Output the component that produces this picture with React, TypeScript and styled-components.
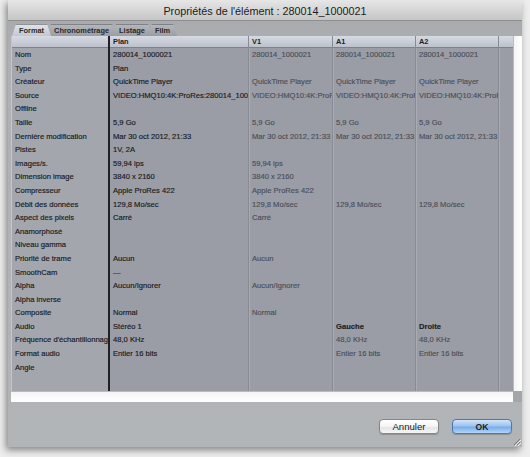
import React from 'react';
import styled, { createGlobalStyle } from 'styled-components';

const GlobalStyle = createGlobalStyle`
  html, body {
    margin: 0;
    padding: 0;
    background: #ededed;
    font-family: "Liberation Sans", Arial, sans-serif;
  }
`;

const ROW_HEIGHT = 13.6;

const labels = [
  'Nom',
  'Type',
  'Créateur',
  'Source',
  'Offline',
  'Taille',
  'Dernière modification',
  'Pistes',
  'Images/s.',
  'Dimension image',
  'Compresseur',
  'Débit des données',
  'Aspect des pixels',
  'Anamorphosé',
  'Niveau gamma',
  'Priorité de trame',
  'SmoothCam',
  'Alpha',
  'Alpha inverse',
  'Composite',
  'Audio',
  "Fréquence d'échantillonnage",
  'Format audio',
  'Angle',
];

// the sheet cuts long paths at the column edge
const sourceFull = 'VIDEO:HMQ10:4K:ProRes:280014_10000';
const sourceTrack = 'VIDEO:HMQ10:4K:ProRe';
const date = 'Mar 30 oct 2012, 21:33';

type Column = {
  title: string;
  width: number;
  primary?: boolean;
  values: string[];
};

const columns: Column[] = [
  {
    title: 'Plan',
    width: 140,
    primary: true,
    values: [
      '280014_1000021', 'Plan', 'QuickTime Player', sourceFull, '', '5,9 Go', date, '1V, 2A',
      '59,94 ips', '3840 x 2160', 'Apple ProRes 422', '129,8 Mo/sec', 'Carré', '', '',
      'Aucun', '—', 'Aucun/Ignorer', '', 'Normal', 'Stéréo 1', '48,0 KHz', 'Entier 16 bits', '',
    ],
  },
  {
    title: 'V1',
    width: 84,
    values: [
      '280014_1000021', '', 'QuickTime Player', sourceTrack, '', '5,9 Go', date, '',
      '59,94 ips', '3840 x 2160', 'Apple ProRes 422', '129,8 Mo/sec', 'Carré', '', '',
      'Aucun', '', 'Aucun/Ignorer', '', 'Normal', '', '', '', '',
    ],
  },
  {
    title: 'A1',
    width: 83,
    values: [
      '280014_1000021', '', 'QuickTime Player', sourceTrack, '', '5,9 Go', date, '',
      '', '', '', '129,8 Mo/sec', '', '', '',
      '', '', '', '', '', 'Gauche', '48,0 KHz', 'Entier 16 bits', '',
    ],
  },
  {
    title: 'A2',
    width: 83,
    values: [
      '280014_1000021', '', 'QuickTime Player', sourceTrack, '', '5,9 Go', date, '',
      '', '', '', '129,8 Mo/sec', '', '', '',
      '', '', '', '', '', 'Droite', '48,0 KHz', 'Entier 16 bits', '',
    ],
  },
];

const emphasized = new Set(['Gauche', 'Droite']);

const tabs = ['Format', 'Chronométrage', 'Listage', 'Film'];

const Page = styled.div`
  height: 457px;
  padding-left: 8px;
  box-sizing: border-box;
`;

const Window = styled.div`
  position: relative;
  width: 514px;
  height: 447px;
  display: flex;
  flex-direction: column;
  background: #b2b5b8;
  box-shadow: -2px 3px 7px rgba(0, 0, 0, 0.45);
`;

const TitleBar = styled.div`
  height: 21px;
  flex-shrink: 0;
  display: flex;
  align-items: center;
  justify-content: center;
  padding-top: 1px;
  box-sizing: border-box;
  background: linear-gradient(#e6e6e6, #c6c6c6);
  border-bottom: 1px solid #8d8d8d;
  color: #1b1b1b;
  font-size: 10.8px;
`;

const Body = styled.div`
  flex: 1;
  display: flex;
  flex-direction: column;
  padding: 3px 0 0 3px;
  background: linear-gradient(#a9abae 0px, #aeb1b4 40px, #b2b5b8 100%);
`;

const TabStrip = styled.div`
  height: 12px;
  display: flex;
  align-items: flex-end;
  padding-left: 1px;
`;

const Tab = styled.div<{ $active?: boolean }>`
  height: 12px;
  display: flex;
  align-items: center;
  padding: 0 7px;
  margin-right: -4px;
  box-sizing: border-box;
  font-size: 7.4px;
  font-weight: bold;
  color: #2a2a2a;
  clip-path: polygon(4px 0, calc(100% - 4px) 0, 100% 100%, 0 100%);
  background: ${p => (p.$active ? 'linear-gradient(#e0e2e6, #c3c7ce)' : 'linear-gradient(#b4b6ba, #9a9da2)')};
  position: relative;
  z-index: ${p => (p.$active ? 2 : 1)};
  border-top: 1px solid ${p => (p.$active ? '#8e9299' : '#7f8288')};
`;

const Panel = styled.div`
  height: 366px;
  display: flex;
  flex-direction: column;
`;

const PanelMain = styled.div`
  flex: 1;
  display: flex;
  min-height: 0;
`;

const Table = styled.div`
  width: 502px;
  display: flex;
  background: #9a9da6;
  border-left: 1px solid #c4c6ca;
  box-sizing: border-box;
`;

const VTrack = styled.div`
  flex: 1;
  background: linear-gradient(90deg, #f4f4f4, #ffffff);
  border-left: 1px solid #b9bbbf;
`;

const PanelBottom = styled.div`
  height: 11px;
  display: flex;
`;

const HTrack = styled.div`
  width: 502px;
  background: linear-gradient(#f4f4f4, #ffffff);
  border-top: 1px solid #b9bbbf;
  box-sizing: border-box;
`;

const ScrollCorner = styled.div`
  flex: 1;
  background: #a3a5a9;
`;

const TableColumn = styled.div<{ $w: number; $kind: 'label' | 'primary' | 'track' | 'filler' }>`
  width: ${p => p.$w}px;
  flex-shrink: 0;
  display: flex;
  flex-direction: column;
  box-sizing: border-box;
  background: ${p => (p.$kind === 'label' ? '#a3a6ad' : '#9a9da6')};
  border-left: ${p =>
    p.$kind === 'primary' ? '2px solid #1f2125' : p.$kind === 'label' ? 'none' : '1px solid #878b94'};
  box-shadow: ${p => (p.$kind === 'track' || p.$kind === 'filler' ? 'inset 1px 0 0 #a8abb2' : 'none')};
  color: ${p => (p.$kind === 'track' ? '#4b4e56' : '#18191c')};
`;

const HeaderCell = styled.div`
  height: 12px;
  flex-shrink: 0;
  box-sizing: border-box;
  padding-left: 3px;
  line-height: 11px;
  font-size: 7.4px;
  font-weight: bold;
  color: #1f2024;
  background: linear-gradient(#d6dae2, #bcc1cc);
  border-bottom: 1px solid #7c818b;
  white-space: nowrap;
  overflow: hidden;
`;

const Cell = styled.div<{ $strong?: boolean }>`
  height: ${ROW_HEIGHT}px;
  line-height: ${ROW_HEIGHT}px;
  padding-left: 3px;
  font-size: 7.6px;
  white-space: nowrap;
  overflow: hidden;
  -webkit-text-stroke: 0.15px currentColor;
  font-weight: ${p => (p.$strong ? 'bold' : 'normal')};
  color: ${p => (p.$strong ? '#1c1d20' : 'inherit')};
`;

const Footer = styled.div`
  flex: 1;
  display: flex;
  align-items: center;
  justify-content: flex-end;
  gap: 13px;
  padding: 4px 10px 0 0;
`;

const Button = styled.button<{ $default?: boolean }>`
  width: 60px;
  height: 15px;
  padding: 0;
  border-radius: 4px;
  font-family: "Liberation Sans", Arial, sans-serif;
  font-size: ${p => (p.$default ? '8.6px' : '9.6px')};
  font-weight: ${p => (p.$default ? 'bold' : 'normal')};
  color: #1a1a1a;
  border: 1px solid ${p => (p.$default ? '#5077ad' : '#868686')};
  background: ${p =>
    p.$default
      ? 'linear-gradient(#d3e5f9 0%, #9dc4f1 45%, #78acec 55%, #b4d4f6 100%)'
      : 'linear-gradient(#ffffff 0%, #f4f4f4 50%, #e4e4e4 55%, #f6f6f6 100%)'};
  box-shadow: 0 1px 1px rgba(0, 0, 0, 0.2);
`;

const Grip = styled.svg`
  position: absolute;
  right: 1px;
  bottom: 1px;
`;

export default function App() {
  return (
    <>
      <GlobalStyle />
      <Page>
        <Window>
          <TitleBar>Propriétés de l'élément : 280014_1000021</TitleBar>
          <Body>
            <TabStrip>
              {tabs.map((t, i) => (
                <Tab key={t} $active={i === 0}>
                  {t}
                </Tab>
              ))}
            </TabStrip>
            <Panel>
              <PanelMain>
                <Table>
                  <TableColumn $w={96} $kind="label">
                    <HeaderCell />
                    {labels.map(l => (
                      <Cell key={l}>{l}</Cell>
                    ))}
                  </TableColumn>
                  {columns.map(col => (
                    <TableColumn key={col.title} $w={col.width} $kind={col.primary ? 'primary' : 'track'}>
                      <HeaderCell>{col.title}</HeaderCell>
                      {col.values.map((v, i) => (
                        <Cell key={i} $strong={emphasized.has(v)}>
                          {v}
                        </Cell>
                      ))}
                    </TableColumn>
                  ))}
                  <TableColumn $w={16} $kind="filler">
                    <HeaderCell />
                  </TableColumn>
                </Table>
                <VTrack />
              </PanelMain>
              <PanelBottom>
                <HTrack />
                <ScrollCorner />
              </PanelBottom>
            </Panel>
            <Footer>
              <Button>Annuler</Button>
              <Button $default>OK</Button>
            </Footer>
          </Body>
          <Grip width="9" height="9" viewBox="0 0 9 9">
            <path d="M8 2 L2 8 M8 5 L5 8" stroke="#7a7a7a" strokeWidth="1" />
            <path d="M9 3 L3 9 M9 6 L6 9" stroke="#f0f0f0" strokeWidth="1" />
          </Grip>
        </Window>
      </Page>
    </>
  );
}
